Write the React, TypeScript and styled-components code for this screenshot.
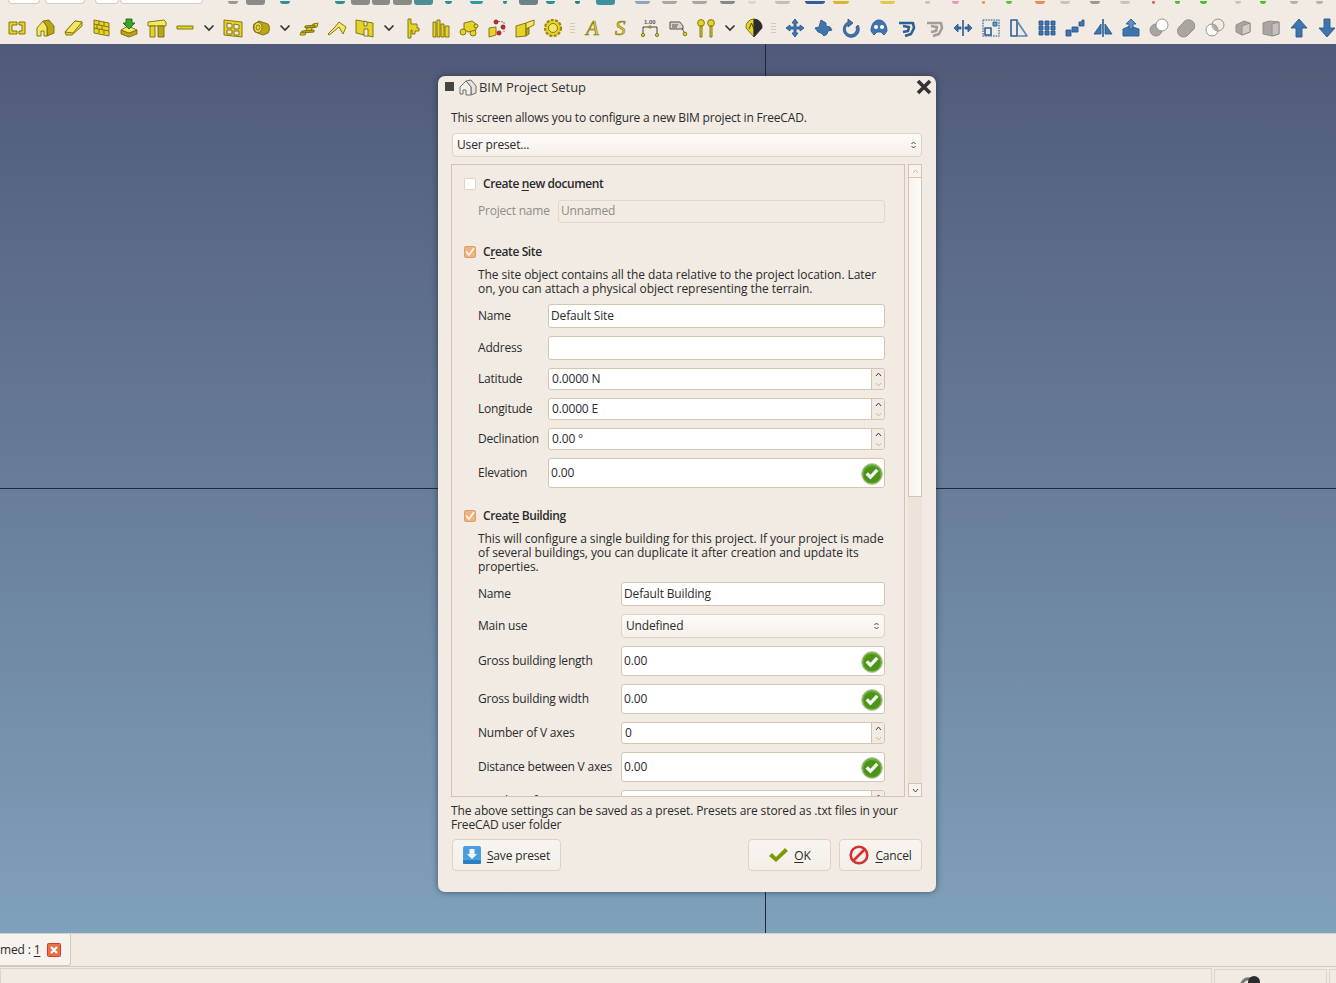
import React from "react";
import styled, { createGlobalStyle } from "styled-components";

const Global = createGlobalStyle`
  html, body { margin: 0; padding: 0; height: 100%; overflow: hidden; }
  body { font-family: "Open Sans", "Noto Sans", sans-serif; font-size: 12px; letter-spacing: -0.15px; color: #2a2a2a; background: #f1ebe4; }
`;

const Page = styled.div`
  width: 1336px;
  height: 983px;
  display: flex;
  flex-direction: column;
  overflow: hidden;
`;

/* ---- toolbars ---- */

const Toolbars = styled.div`
  height: 44px;
  flex: none;
  background: #f1ebe4;
  overflow: hidden;
`;

const ClippedRow = styled.div`
  height: 6px;
  display: flex;
  overflow: hidden;
`;

const Stub = styled.div<{ $at: number; $w: number; $c: string; $box?: boolean }>`
  flex: none;
  width: ${(p) => p.$w}px;
  margin-left: ${(p) => p.$at}px;
  height: ${(p) => (p.$box ? 5 : 3)}px;
  margin-top: ${(p) => (p.$box ? 0 : 1)}px;
  background: ${(p) => p.$c};
  border-radius: 0 0 3px 3px;
`;

const OutlineStub = styled(Stub)`
  background: #fff;
  border: 1px solid #d8ccbe;
  border-top: 0;
  height: 3px;
  margin-top: 0;
  box-sizing: content-box;
  border-radius: 0 0 4px 4px;
`;

const IconRow = styled.div`
  height: 32px;
  margin-top: 6px;
  padding-left: 3px;
  display: flex;
  align-items: center;
`;

const ToolButton = styled.div`
  flex: none;
  width: 28px;
  height: 32px;
  display: flex;
  align-items: center;
  justify-content: center;
`;

const Chevron = styled.div`
  flex: none;
  width: 20px;
  display: flex;
  justify-content: center;
`;

const Grip = styled.div`
  flex: none;
  width: 13px;
  height: 10px;
  margin-left: -1px;
  margin-right: 1px;
  background: repeating-linear-gradient(#d8c9b6 0 1px, transparent 1px 3px);
  background-size: 5px 10px;
  background-repeat: no-repeat;
  background-position: center;
`;

const Svg = styled.svg<{ $tone: string }>`
  display: block;
  width: 20px;
  height: 20px;
  overflow: visible;
  stroke-width: 0.9;
  stroke-linejoin: round;
  ${(p) =>
    p.$tone === "yellow"
      ? "fill: #e6d32a; stroke: #7a6c08;"
      : p.$tone === "blue"
      ? "fill: #3f74ad; stroke: #2a5a90;"
      : p.$tone === "gray"
      ? "fill: #a9a6a2; stroke: #8d8a86;"
      : "fill: none; stroke: #333;"}
`;

const Glyph = styled.text`
  font-family: "Liberation Serif", serif;
  font-style: italic;
  font-size: 21px;
  letter-spacing: 0;
  fill: #e6d32a;
  stroke: #7a6c08;
  stroke-width: 0.6;
`;

const TinyGlyph = styled.text`
  font-family: "Liberation Sans", sans-serif;
  font-size: 6px;
  font-weight: 700;
  letter-spacing: 0;
  fill: #555;
  stroke: none;
`;

type IconDef = { tone: string; body: React.ReactNode };

const Y2 = "#f3e765";
const Y3 = "#b9a516";

const toolIcons: Record<string, IconDef> = {
  arch: { tone: "yellow", body: <><path d="M2 4h8v3H5v6h5v3H2z" /><path d="M18 4h-6v3h3v6h-3v3h6z" /></> },
  house: { tone: "yellow", body: <><path fill={Y3} d="M8 3l6-1 5 6v7l-7 3V9z" /><path fill={Y2} d="M2 18v-8l6-7 4 6v9H9v-5H6v5z" /></> },
  slab: { tone: "yellow", body: <><path d="M2 14 12 3l7 1v4L9 17l-6 0z" /><path fill={Y2} d="M2 14 12 3l7 1-9 11z" /></> },
  wall: { tone: "yellow", body: <><path d="M3 2l15 3v13L3 15z" /><path fill="none" d="M3 6l15 3M3 10l15 3M8 3v4M13 4v4M6 7v4M11 8v4M8 11v4M13 12v4" /></> },
  tray: { tone: "yellow", body: <><path fill={Y3} d="M2 12l8 3 8-3v4l-8 3-8-3z" /><path fill={Y2} d="M2 12l7-4 9 4-8 3z" /><path fill="#35a82c" stroke="#1c6a14" d="M7 1h6v4h3l-6 6-6-6h3z" /></> },
  column: { tone: "yellow", body: <><path fill={Y2} d="M1 4l16-2 2 2v4H1z" /><path d="M3 8h5v11H3z" /><path fill={Y3} d="M11 8h6v11h-6z" /></> },
  line: { tone: "yellow", body: <path d="M2 8h16v3H2z" /> },
  windowed: { tone: "yellow", body: <><path d="M1 2l18 2v15L1 17z" /><path fill="#f1ebe4" d="M4 5l5 1v4H4zM11 6l5 1v4h-5zM4 12h5v4H4zM11 13h5v4h-5z" /></> },
  pipe: { tone: "yellow", body: <><path fill={Y3} d="M3 6l5-3 9 3c2 2 2 7 0 9l-5 2-8-3c-2-2-2-6-1-8z" /><ellipse cx="7" cy="9.5" rx="4" ry="5" fill={Y2} /><ellipse cx="7" cy="9.5" rx="2" ry="2.6" fill="#e6d32a" /></> },
  stairs: { tone: "yellow", body: <><path d="M1 17l1-3 5-1 1-3 5-1 1-3 5-1-1 4-5 1-1 3-5 1-1 3z" /><path fill={Y3} d="M3 13l12-1v2l-12 1zM6 8l10-1v2l-10 1z" /></> },
  roof: { tone: "yellow", body: <><path fill={Y2} d="M1 16l7-7 4-5 7 5-3 7-4-7-6 5-4 3z" /></> },
  door: { tone: "yellow", body: <><path d="M1 2l17 3v14L1 15z" /><path fill="#f1ebe4" d="M9 3l3 1v4H9zM9 11h4v7H9z" /></> },
  axis: { tone: "yellow", body: <path d="M5 1h3v5h6v4h2v3h-4v3H9v-4H8v8H5z" /> },
  bars: { tone: "yellow", body: <path d="M2 4h3v15H2zM6 2h3v17H6zM10 6h3v13h-3zM14 8h4v11h-4z" /> },
  cubes: { tone: "yellow", body: <><circle cx="4" cy="14" r="3" /><circle cx="14" cy="15" r="3" /><path d="M5 5l8-2 4 3v6l-8 2-4-3z" /><circle cx="17" cy="8" r="2" /></> },
  nodes: { tone: "yellow", body: <><path d="M2 10l7-1v8l-7 2z" /><path fill="none" stroke="#666" strokeDasharray="2 1" d="M8 3l9 1v10" /><circle cx="9" cy="4" r="2" fill="#d02020" stroke="#902020" /><circle cx="16" cy="9" r="2" fill="#d02020" stroke="#902020" /><circle cx="12" cy="15" r="2" fill="#d02020" stroke="#902020" /></> },
  fold: { tone: "yellow", body: <><path d="M1 8l10-3v13L1 19z" /><path fill={Y2} d="M11 5l8-3v5l-8 4z" /><path fill={Y3} d="M11 11l3-1v6l-3 2z" /></> },
  gear: { tone: "yellow", body: <><circle cx="10" cy="10" r="8" strokeDasharray="3 1.4" strokeWidth="2.2" stroke="#9a8810" /><circle cx="10" cy="10" r="4.5" fill={Y2} /></> },
  textA: { tone: "none", body: <Glyph x="2" y="17">A</Glyph> },
  textS: { tone: "none", body: <Glyph x="3" y="17">S</Glyph> },
  dim: { tone: "none", body: <><TinyGlyph x="4" y="6">1.00</TinyGlyph><path stroke="#333" d="M3 9h14M3 9v7M17 9v7" /><circle cx="3" cy="17" r="1.6" fill="#e6d32a" stroke="#7a6c08" /><circle cx="17" cy="17" r="1.6" fill="#e6d32a" stroke="#7a6c08" /><circle cx="10" cy="9" r="1.2" fill="#e6d32a" stroke="#7a6c08" /></> },
  label: { tone: "none", body: <><path fill="#d9d3ca" stroke="#444" d="M2 4h10l3 4v3H2z" /><path stroke="#444" d="M4 7h6M4 9h5M14 10l3 6" /><circle cx="17" cy="16" r="1.8" fill="#e6d32a" stroke="#7a6c08" /></> },
  pins: { tone: "yellow", body: <><circle cx="5" cy="5" r="3.4" /><circle cx="15" cy="5" r="3.4" /><path d="M4 8h2v11H4zM14 8h2v11h-2z" /></> },
  diamond: { tone: "yellow", body: <><path d="M10 1a8 8 0 0 0-8 9l8 9z" /><path fill="#2c2c2c" stroke="#2c2c2c" d="M10 1a8 8 0 0 1 8 9l-8 9z" /><path fill="none" stroke="#333" d="M5 11l2.5-6L10 11" /></> },
  move: { tone: "blue", body: <path d="M10 1l3 4h-2v4h4V7l4 3-4 3v-2h-4v4h2l-3 4-3-4h2v-4H5v2l-4-3 4-3v2h4V5H7z" /> },
  moveAlt: { tone: "blue", body: <path d="M8 2l5 3v3l4 1 2 3-4 1-1 3-3 2-3-3-3-1-3-4 4-1z" /> },
  rotate: { tone: "blue", body: <path d="M7 1l5 4-5 4V6.5a5.5 5.5 0 1 0 8 2.5l2-2a8 8 0 1 1-10-3z" /> },
  dome: { tone: "blue", body: <><path d="M2 13c0-6 3-11 8-11s8 5 8 11l-3 4-3-3h-4l-3 3z" /><circle cx="7" cy="9" r="2" fill="#fff" stroke="none" /><circle cx="13" cy="9" r="2" fill="#fff" stroke="none" /></> },
  spiral: { tone: "none", body: <path fill="none" stroke="#2e5f93" strokeWidth="2.6" d="M2 5h14l1 5-3 6-6 2M6 14l5-1 1-4-6-1" /> },
  spiralGray: { tone: "none", body: <path fill="none" stroke="#a09c97" strokeWidth="2.6" d="M2 5h14l1 5-3 6-6 2M6 14l5-1 1-4-6-1" /> },
  split: { tone: "blue", body: <><path d="M1 10l4-4v8zM19 10l-4-4v8z" /><path d="M5 9h3v2H5zM12 9h3v2h-3z" /><path d="M10 2v16" strokeWidth="1.6" /></> },
  scale: { tone: "none", body: <><path fill="none" stroke="#5a86b8" strokeWidth="1.6" strokeDasharray="1.6 1" d="M2 2h16v16H2z" /><path fill="#f1ebe4" stroke="#2e5f93" strokeWidth="1.6" d="M4 10h6v7H4z" /><path fill="#6f99c4" stroke="#2e5f93" d="M12 4h4v4h-4z" /></> },
  draft: { tone: "none", body: <><path fill="none" stroke="#2e5f93" strokeWidth="1.6" d="M2 2h6v16H2z" /><path fill="none" stroke="#5a86b8" strokeWidth="1.6" d="M8 3l10 15H8" /></> },
  grid: { tone: "blue", body: <path d="M2 3h4v4H2zM8 3h4v4H8zM14 3h4v4h-4zM2 8h4v4H2zM8 8h4v4H8zM14 8h4v4h-4zM2 13h4v4H2zM8 13h4v4H8zM14 13h4v4h-4z" /> },
  steps: { tone: "blue", body: <path d="M1 12h5v6H1zM7 9h6v5H7zM14 4h3V2h2v6h-5z" /> },
  mirror: { tone: "blue", body: <><path d="M1 16l7-10v10zM19 16l-7-10v10z" /><path d="M10 1v18" strokeWidth="1.6" /></> },
  extrude: { tone: "blue", body: <><path d="M2 11l7-3 9 3v7H2z" /><path fill="#5d8fc4" d="M10 1l5 5h-3v5H8V6H5z" /></> },
  subtract: { tone: "gray", body: <><circle cx="7" cy="12" r="6" /><circle cx="13" cy="7" r="6" fill="#fff" /></> },
  union: { tone: "gray", body: <path d="M6 5a6 6 0 0 1 11 6l-6 6a6 6 0 0 1-9-8z" /> },
  intersect: { tone: "none", body: <><circle cx="7" cy="12" r="6" fill="#fff" stroke="#8a8782" /><circle cx="13" cy="7" r="6" fill="none" stroke="#8a8782" /><path fill="#a9a6a2" stroke="none" d="M8 6.5a6 6 0 0 1 5 6.4 6 6 0 0 1-5-6.4z" /></> },
  cubeSmall: { tone: "gray", body: <><path d="M3 7l8-4 6 2v9l-8 3-6-3z" /><path fill="#d0ccc6" d="M9 8l8-3v9l-8 3z" /></> },
  cube: { tone: "gray", body: <><path d="M2 5l6-2 10 1v12l-7 2-9-2z" /><path fill="#c5c1bc" d="M11 6l7-2v12l-7 2z" /></> },
  arrowUp: { tone: "blue", body: <path d="M10 1l8 9h-5v9H7v-9H2z" /> },
  arrowDown: { tone: "blue", body: <path d="M7 1h6v9h5l-8 9-8-9h5z" /> },
};

const toolbarLayout: string[] = [
  "arch", "house", "slab", "wall", "tray", "column", "line", "|v",
  "windowed", "pipe", "|v", "stairs", "roof", "door", "|v",
  "axis", "bars", "cubes", "nodes", "fold", "gear", "|g",
  "textA", "textS", "dim", "label", "pins", "|v", "diamond", "|g",
  "move", "moveAlt", "rotate", "dome", "spiral", "spiralGray", "split", "scale", "draft",
  "grid", "steps", "mirror", "extrude", "subtract", "union", "intersect", "cubeSmall", "cube", "arrowUp", "arrowDown",
];

const ChevronIcon = () => (
  <svg width="12" height="8" viewBox="0 0 12 8">
    <path d="M1.5 1.5 6 6l4.5-4.5" fill="none" stroke="#333" strokeWidth="1.6" />
  </svg>
);

const clipped: [number, number, string, boolean?][] = [
  [228, 10, "#9a9894"], [246, 19, "#8c8a87", true], [280, 10, "#2c8f96"], [335, 10, "#2c8f96"],
  [351, 19, "#8c8a87", true], [372, 18, "#8c8a87", true], [393, 19, "#8c8a87", true], [414, 19, "#4d8e96", true],
  [445, 7, "#2c8f96"], [470, 13, "#2c9aa0"], [503, 4, "#2c8f96"], [519, 19, "#6c8288", true], [546, 9, "#2c8f96"],
  [575, 5, "#2c7f8f"], [596, 19, "#3c929a", true], [635, 15, "#8fa6c0"], [662, 15, "#a8a6a2"], [692, 15, "#a8a6a2"],
  [720, 15, "#8a8886"], [748, 8, "#d9d6d2"], [775, 15, "#c2bfbb"], [805, 20, "#2e5f9b"], [833, 16, "#d8b72a"],
  [880, 15, "#e3c94a"], [925, 5, "#c7c4c0"], [952, 7, "#e89ab8"], [982, 3, "#e89a6a"], [1006, 6, "#5cbf3c"],
  [1035, 10, "#e09060"], [1060, 10, "#c7c4c0"], [1090, 10, "#9b9893"], [1120, 10, "#c7c4c0"], [1152, 3, "#e07060"],
  [1175, 5, "#46c02c"], [1200, 7, "#46c02c"], [1235, 6, "#c7c4c0"], [1260, 6, "#46c02c"], [1290, 8, "#b4b1ad"], [1316, 7, "#b4b1ad"],
];

const TopClipped = () => {
  // the spin boxes end at x=203, the rest of the strip follows them
  let cursor = 203;
  return (
    <ClippedRow>
      <OutlineStub $at={8} $w={30} $c="#fff" />
      <OutlineStub $at={5} $w={38} $c="#fff" />
      <OutlineStub $at={10} $w={22} $c="#fff" />
      <OutlineStub $at={1} $w={81} $c="#fff" />
      {clipped.map(([x, w, c, box], i) => {
        const at = x - cursor;
        cursor = x + w;
        return <Stub key={i} $at={at} $w={w} $c={c} $box={box} />;
      })}
    </ClippedRow>
  );
};

const Toolbar = () => (
  <Toolbars>
    <TopClipped />
    <IconRow>
      {toolbarLayout.map((name, i) => {
        if (name === "|v")
          return (
            <Chevron key={i}>
              <ChevronIcon />
            </Chevron>
          );
        if (name === "|g") return <Grip key={i} />;
        const icon = toolIcons[name];
        return (
          <ToolButton key={i}>
            <Svg $tone={icon.tone} viewBox="0 0 20 20">
              {icon.body}
            </Svg>
          </ToolButton>
        );
      })}
    </IconRow>
  </Toolbars>
);

/* ---- 3d view ---- */

const Viewport = styled.div`
  position: relative;
  flex: 1;
  background: linear-gradient(#505a78, #80a1bb);
`;

const AxisV = styled.div`
  position: absolute;
  left: 765px;
  top: 0;
  bottom: 0;
  width: 1px;
  background: #20283a;
`;

const AxisH = styled.div`
  position: absolute;
  left: 0;
  right: 0;
  top: 444px;
  height: 1px;
  background: #20283a;
`;

/* ---- dialog ---- */

const Dialog = styled.div`
  position: absolute;
  left: 438px;
  top: 32px;
  width: 498px;
  height: 816px;
  box-sizing: border-box;
  padding: 0 14px 0 13px;
  background: #f1ebe4;
  border-radius: 7px;
  box-shadow: 0 0 6px rgba(20, 25, 40, 0.55);
  display: flex;
  flex-direction: column;
`;

const TitleBar = styled.div`
  height: 23px;
  box-sizing: border-box;
  padding-bottom: 2px;
  margin: 0 -10px 0 -6px;
  display: flex;
  align-items: center;
  color: #333;
  font-size: 13px;
`;

const WindowMenu = styled.div`
  width: 9px;
  height: 9px;
  background: #444;
  margin-right: 5px;
`;

const TitleIcon = styled.svg`
  width: 18px;
  height: 18px;
  margin-right: 2px;
  flex: none;
`;

const TitleText = styled.div`
  flex: 1;
  letter-spacing: -0.05px;
`;

const Intro = styled.div`
  margin-top: 11px;
  line-height: 16px;
  letter-spacing: -0.18px;
`;

const Combo = styled.div<{ $h?: number }>`
  height: ${(p) => p.$h ?? 24}px;
  box-sizing: border-box;
  padding: 0 5px 0 4px;
  border: 1px solid #dfd2c3;
  border-radius: 4px;
  background: linear-gradient(#fdfbf9, #f5f0ea);
  display: flex;
  align-items: center;
  justify-content: space-between;
`;

const TopCombo = styled(Combo)`
  margin: 7px 0 7px 1px;
`;

const ScrollArea = styled.div`
  height: 633px;
  display: flex;
  flex: none;
  gap: 3px;
`;

const Frame = styled.div`
  flex: none;
  width: 454px;
  box-sizing: border-box;
  border: 1px solid #d5c4b0;
  padding: 11px 19px 0 12px;
  overflow: hidden;
`;

const CheckRow = styled.div<{ $top?: number }>`
  height: 16px;
  margin-top: ${(p) => p.$top ?? 0}px;
  display: flex;
  align-items: center;
  gap: 7px;
`;

const CheckLabel = styled.span`
  font-weight: 600;
  letter-spacing: -0.4px;
  margin-bottom: 1px;
`;

const Box = styled.div<{ $on?: boolean }>`
  width: 12px;
  height: 12px;
  box-sizing: border-box;
  flex: none;
  border: 1px solid ${(p) => (p.$on ? "#d9a070" : "#dfd2c3")};
  border-radius: 2px;
  background: ${(p) => (p.$on ? "#f3b27c" : "#fff")};
  display: flex;
`;

const Section = styled.div`
  padding-left: 14px;
`;

const Description = styled.div`
  margin: 8px 0;
  line-height: 14px;
  white-space: nowrap;
  letter-spacing: -0.06px;
`;

const Rows = styled.div<{ $label: number; $top?: number }>`
  margin-top: ${(p) => p.$top ?? 0}px;
  display: grid;
  grid-template-columns: ${(p) => p.$label}px minmax(0, 1fr);
  row-gap: 8px;
  align-items: center;
`;

const RowLabel = styled.div<{ $off?: boolean }>`
  white-space: nowrap;
  letter-spacing: -0.2px;
  padding-bottom: 2px;
  color: ${(p) => (p.$off ? "#8f8b86" : "inherit")};
`;

/* the text sits a pixel above the middle of its box */
const Val = styled.span`
  margin-bottom: 2px;
`;

const Field = styled.div<{ $h?: number; $off?: boolean; $pad?: number }>`
  height: ${(p) => p.$h ?? 24}px;
  box-sizing: border-box;
  padding: 0 1px 0 ${(p) => p.$pad ?? 2}px;
  border: 1px solid #d5c4b0;
  border-radius: 3px;
  background: ${(p) => (p.$off ? "#f1ebe4" : "#fff")};
  color: ${(p) => (p.$off ? "#8f8b86" : "inherit")};
  ${(p) => (p.$off ? "border-color: #e2d7ca;" : "")}
  display: flex;
  align-items: center;
  justify-content: space-between;
`;

const SpinField = styled(Field)`
  height: 22px;
  padding-right: 0;
  padding-left: 3px;
`;

const SpinButtons = styled.div`
  flex: none;
  width: 12px;
  height: 20px;
  border-left: 1px solid #d5c4b0;
  background: #f1ebe4;
  margin-left: auto;
  border-radius: 0 3px 3px 0;
  display: flex;
  flex-direction: column;
  align-items: center;
  justify-content: space-around;
`;

const ScrollBar = styled.div`
  width: 14px;
  flex: none;
  display: flex;
  flex-direction: column;
  background: #ece4db;
`;

const ScrollArrow = styled.div`
  height: 14px;
  flex: none;
  box-sizing: border-box;
  border: 1px solid #d5c4b0;
  background: #f7f3ee;
  display: flex;
  align-items: center;
  justify-content: center;
`;

const ScrollThumb = styled.div`
  height: 319px;
  flex: none;
  box-sizing: border-box;
  border: 1px solid #d5c4b0;
  border-top: 0;
  background: linear-gradient(90deg, #f7f3ee, #fdfbf9);
`;

const ScrollRest = styled.div`
  flex: 1;
`;

const Note = styled.div`
  margin-top: 7px;
  line-height: 14px;
  letter-spacing: -0.12px;
`;

const Footer = styled.div`
  margin-top: 7px;
  padding-left: 1px;
  display: flex;
  gap: 8px;
`;

const Button = styled.div<{ $w: number; $push?: boolean }>`
  width: ${(p) => p.$w}px;
  height: 32px;
  box-sizing: border-box;
  margin-left: ${(p) => (p.$push ? "auto" : "0")};
  border: 1px solid #dfd2c3;
  border-radius: 4px;
  background: linear-gradient(#f8f5f1, #f3eee8);
  display: flex;
  align-items: center;
  justify-content: center;
  gap: 6px;
`;

const Key = styled.span`
  text-decoration: underline;
  text-underline-offset: 2px;
`;

/* ---- bottom ---- */

const TabStrip = styled.div`
  height: 33px;
  flex: none;
  background: #f1ebe4;
  border-top: 1px solid #d0d2d0;
  box-sizing: border-box;
  display: flex;
`;

const Tab = styled.div`
  width: 71px;
  height: 32px;
  box-sizing: border-box;
  padding-right: 9px;
  background: #f6f2ed;
  border-right: 1px solid #d5c9bb;
  border-bottom: 1px solid #d5c9bb;
  border-radius: 0 0 3px 0;
  display: flex;
  align-items: center;
  justify-content: space-between;
  white-space: nowrap;
`;

const StatusBar = styled.div`
  height: 17px;
  flex: none;
  box-sizing: border-box;
  border-top: 1px solid #d5c9bb;
  padding-top: 1px;
  display: flex;
  background: #f1ebe4;
  overflow: hidden;
`;

const StatusCell = styled.div<{ $w: number; $drop?: boolean }>`
  flex: none;
  width: ${(p) => p.$w}px;
  height: 30px;
  box-sizing: border-box;
  margin: ${(p) => (p.$drop ? "1px" : "0")} 2px 0 0;
  border: 1px solid #d8d4ce;
  padding: 5px 0 0 25px;
`;

const CheckSvg = styled.svg`
  flex: none;
  margin-top: 2px;
`;

const SmallCheck = () => (
  <CheckSvg width="22" height="22" viewBox="0 0 22 22">
    <circle cx="11" cy="11" r="10.4" fill="#6fae35" stroke="#bfc4b8" strokeWidth="1" />
    <circle cx="11" cy="11.5" r="8.6" fill="#4b9417" />
    <path d="M4.5 11.5 9.5 16.5 17.5 8 15 5.8 9.5 11.8 7 9.2z" fill="#f4f4f4" />
  </CheckSvg>
);

const TickBox = ({ on }: { on?: boolean }) => (
  <Box $on={on}>
    {on && (
      <svg width="10" height="10" viewBox="0 0 10 10">
        <path d="M1 4.5 4 8l5-7" fill="none" stroke="#fff" strokeWidth="1.4" />
      </svg>
    )}
  </Box>
);

const UpDown = () => (
  <svg width="5" height="8" viewBox="0 0 5 8">
    <path d="M.5 3 2.5 1l2 2M.5 5l2 2 2-2" fill="none" stroke="#444" strokeWidth="1" />
  </svg>
);

const Caret = ({ up, light }: { up?: boolean; light?: boolean }) => (
  <svg width="7" height="5" viewBox="0 0 7 5">
    <path d={up ? "M1 4 3.5 1 6 4" : "M1 1l2.5 3L6 1"} fill="none" stroke={light ? "#c9bba9" : "#444"} strokeWidth="1" />
  </svg>
);

const Spin = ({ value }: { value: string }) => (
  <SpinField>
    <Val>{value}</Val>
    <SpinButtons>
      <Caret up />
      <Caret light />
    </SpinButtons>
  </SpinField>
);

const CheckedField = ({ value }: { value: string }) => (
  <Field $h={30}>
    <Val>{value}</Val>
    <SmallCheck />
  </Field>
);

export default function App() {
  return (
    <Page>
      <Global />
      <Toolbar />
      <Viewport>
        <AxisV />
        <AxisH />
        <Dialog>
          <TitleBar>
            <WindowMenu />
            <TitleIcon viewBox="0 0 18 18">
              <path d="M1 9l6-6 5-1 5 6v7l-5 2V9L7 3" fill="#e6e3df" stroke="#6e6c69" />
              <path d="M1 9v7h3v-4h3v5h5V9L7 3z" fill="#f2f0ed" stroke="#6e6c69" />
            </TitleIcon>
            <TitleText>BIM Project Setup</TitleText>
            <svg width="16" height="16" viewBox="0 0 16 16">
              <path d="M2 2l12 12M14 2 2 14" stroke="#333" strokeWidth="3.6" />
            </svg>
          </TitleBar>
          <Intro>This screen allows you to configure a new BIM project in FreeCAD.</Intro>
          <TopCombo>
            <Val>User preset...</Val>
            <UpDown />
          </TopCombo>
          <ScrollArea>
            <Frame>
              <CheckRow>
                <TickBox />
                <CheckLabel>
                  Create <Key>n</Key>ew document
                </CheckLabel>
              </CheckRow>
              <Section>
                <Rows $label={80} $top={8}>
                  <RowLabel $off>Project name</RowLabel>
                  <Field $h={23} $off>
                    <Val>Unnamed</Val>
                  </Field>
                </Rows>
              </Section>

              <CheckRow $top={21}>
                <TickBox on />
                <CheckLabel>
                  C<Key>r</Key>eate Site
                </CheckLabel>
              </CheckRow>
              <Section>
                <Description>
                  The site object contains all the data relative to the project location. Later
                  <br />
                  on, you can attach a physical object representing the terrain.
                </Description>
                <Rows $label={70}>
                  <RowLabel>Name</RowLabel>
                  <Field>
                    <Val>Default Site</Val>
                  </Field>
                  <RowLabel>Address</RowLabel>
                  <Field />
                  <RowLabel>Latitude</RowLabel>
                  <Spin value="0.0000 N" />
                  <RowLabel>Longitude</RowLabel>
                  <Spin value="0.0000 E" />
                  <RowLabel>Declination</RowLabel>
                  <Spin value="0.00 °" />
                  <RowLabel>Elevation</RowLabel>
                  <CheckedField value="0.00" />
                </Rows>
              </Section>

              <CheckRow $top={20}>
                <TickBox on />
                <CheckLabel>
                  Creat<Key>e</Key> Building
                </CheckLabel>
              </CheckRow>
              <Section>
                <Description>
                  This will configure a single building for this project. If your project is made
                  <br />
                  of several buildings, you can duplicate it after creation and update its
                  <br />
                  properties.
                </Description>
                <Rows $label={143}>
                  <RowLabel>Name</RowLabel>
                  <Field>
                    <Val>Default Building</Val>
                  </Field>
                  <RowLabel>Main use</RowLabel>
                  <Combo>
                    <Val>Undefined</Val>
                    <UpDown />
                  </Combo>
                  <RowLabel>Gross building length</RowLabel>
                  <CheckedField value="0.00" />
                  <RowLabel>Gross building width</RowLabel>
                  <CheckedField value="0.00" />
                  <RowLabel>Number of V axes</RowLabel>
                  <Spin value="0" />
                  <RowLabel>Distance between V axes</RowLabel>
                  <CheckedField value="0.00" />
                  <RowLabel>Number of H axes</RowLabel>
                  <Spin value="0" />
                </Rows>
              </Section>
            </Frame>
            <ScrollBar>
              <ScrollArrow>
                <Caret up light />
              </ScrollArrow>
              <ScrollThumb />
              <ScrollRest />
              <ScrollArrow>
                <Caret />
              </ScrollArrow>
            </ScrollBar>
          </ScrollArea>
          <Note>
            The above settings can be saved as a preset. Presets are stored as .txt files in your
            <br />
            FreeCAD user folder
          </Note>
          <Footer>
            <Button $w={109}>
              <svg width="18" height="18" viewBox="0 0 18 18">
                <rect width="18" height="18" rx="2" fill="#4a9ee0" />
                <rect y="14" width="18" height="4" rx="1" fill="#2d7fc4" />
                <path d="M6.5 3h5v5H14l-5 5-5-5h2.5z" fill="#f4f8fc" />
              </svg>
              <span>
                <Key>S</Key>ave preset
              </span>
            </Button>
            <Button $w={83} $push>
              <svg width="20" height="16" viewBox="0 0 20 16">
                <path d="M1 9l3-3 4 4L17 1l3 3L8 15z" fill="#7c9a06" />
              </svg>
              <span>
                <Key>O</Key>K
              </span>
            </Button>
            <Button $w={83}>
              <svg width="20" height="20" viewBox="0 0 20 20">
                <circle cx="10" cy="10" r="8.3" fill="none" stroke="#d63030" strokeWidth="2.6" />
                <path d="M4.5 15.5l11-11" stroke="#d63030" strokeWidth="2.6" />
              </svg>
              <span>
                <Key>C</Key>ancel
              </span>
            </Button>
          </Footer>
        </Dialog>
      </Viewport>
      <TabStrip>
        <Tab>
          <span>
            med : <Key>1</Key>
          </span>
          <svg width="14" height="14" viewBox="0 0 14 14">
            <rect x=".5" y=".5" width="13" height="13" rx="1" fill="#e8714a" stroke="#d63a2a" />
            <path d="M4 4l6 6M10 4l-6 6" stroke="#fff" strokeWidth="2" />
          </svg>
        </Tab>
      </TabStrip>
      <StatusBar>
        <StatusCell $w={1212} />
        <StatusCell $w={113} $drop>
          <svg width="20" height="12" viewBox="0 0 20 12">
            <path d="M1 12c0-6 4-10 9-9" fill="none" stroke="#777" strokeWidth="3" />
            <circle cx="14" cy="6" r="6" fill="#2c2c2c" />
          </svg>
        </StatusCell>
        <StatusCell $w={20} $drop />
      </StatusBar>
    </Page>
  );
}
